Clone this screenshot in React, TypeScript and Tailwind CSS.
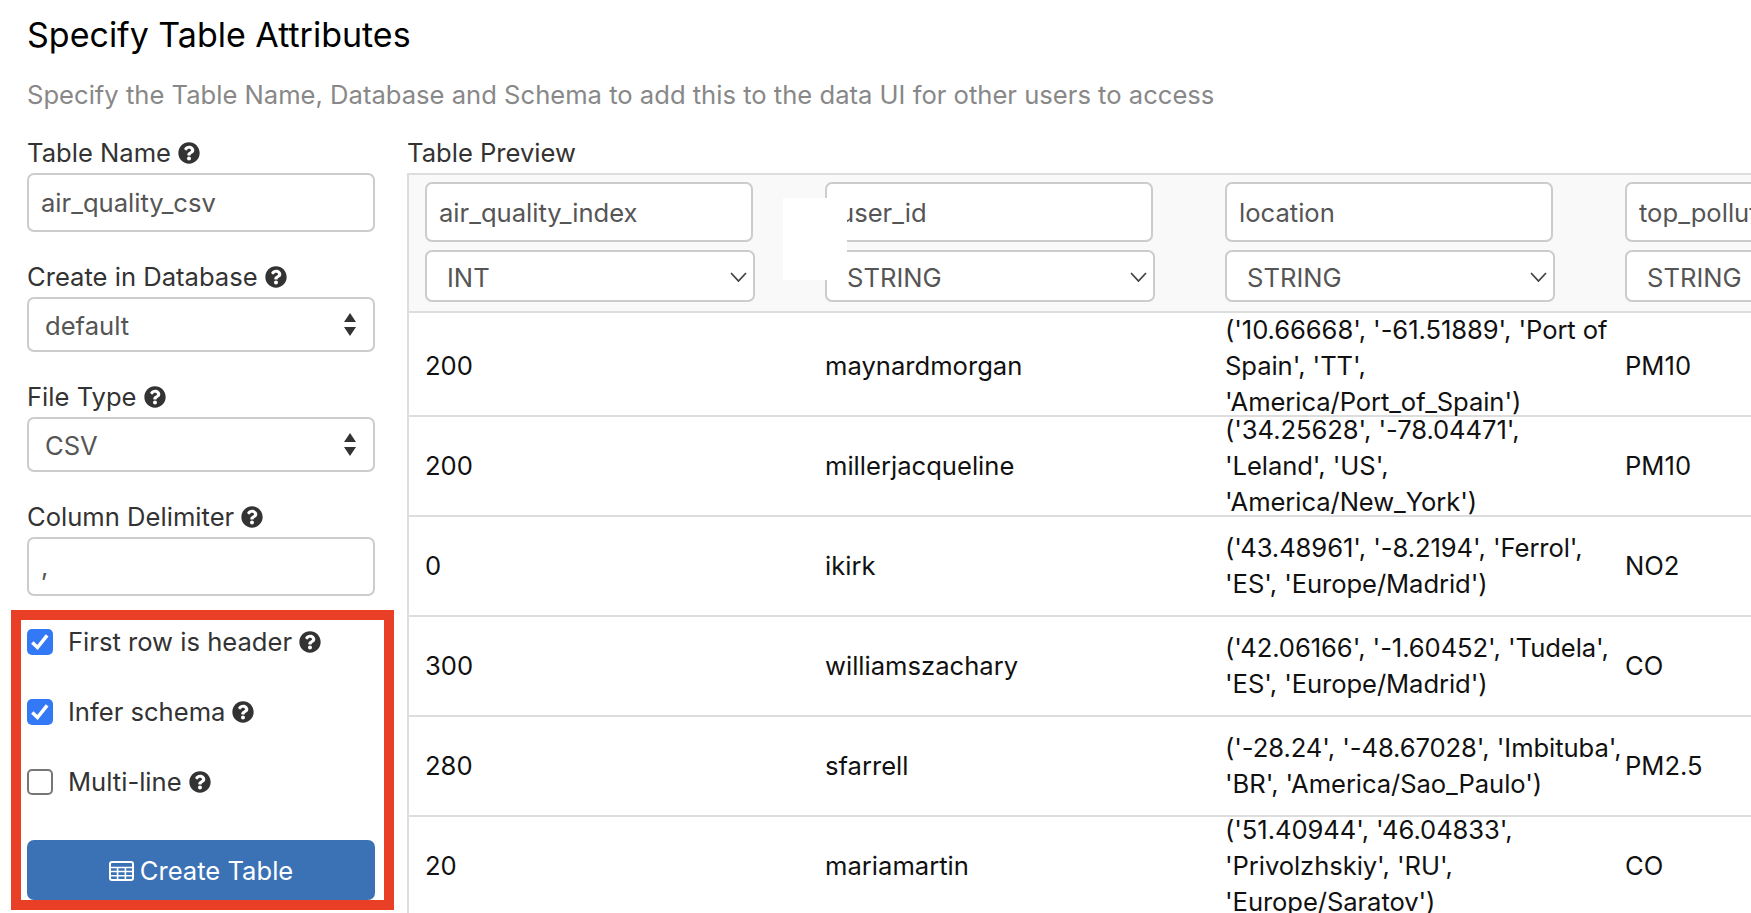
import React from 'react';
import { FaQuestionCircle } from 'react-icons/fa';

const columns = [
    { name: 'air_quality_index', type: 'INT' },
    { name: 'user_id', type: 'STRING' },
    { name: 'location', type: 'STRING' },
    { name: 'top_pollutant', type: 'STRING' },
];

const rows = [
    ['200', 'maynardmorgan', "('10.66668', '-61.51889', 'Port of Spain', 'TT', 'America/Port_of_Spain')", 'PM10'],
    ['200', 'millerjacqueline', "('34.25628', '-78.04471', 'Leland', 'US', 'America/New_York')", 'PM10'],
    ['0', 'ikirk', "('43.48961', '-8.2194', 'Ferrol', 'ES', 'Europe/Madrid')", 'NO2'],
    ['300', 'williamszachary', "('42.06166', '-1.60452', 'Tudela', 'ES', 'Europe/Madrid')", 'CO'],
    ['280', 'sfarrell', "('-28.24', '-48.67028', 'Imbituba', 'BR', 'America/Sao_Paulo')", 'PM2.5'],
    ['20', 'mariamartin', "('51.40944', '46.04833', 'Privolzhskiy', 'RU', 'Europe/Saratov')", 'CO'],
];

const Help = () => <FaQuestionCircle size={22} className="text-[#333] ml-[7px] shrink-0" />;

const Label = ({ text, className = '' }: { text: string; className?: string }) => (
    <div className={`flex items-center h-[30px] mb-[5px] text-[#333] ${className}`}>
        {text}
        <Help />
    </div>
);

const TextInput = ({ value }: { value: string }) => (
    <input
        readOnly
        value={value}
        className="block w-full h-[59px] px-[12px] bg-white border-2 border-[#ccc] rounded-[7px] text-[#555] outline-none"
    />
);

const UpDownSelect = ({ value }: { value: string }) => (
    <div className="relative h-[55px]">
        <select
            value={value}
            onChange={() => {}}
            className="block w-full h-full pl-[16px] pt-[4px] bg-white border-2 border-[#ccc] rounded-[7px] text-[#555] outline-none appearance-none"
        >
            <option>{value}</option>
        </select>
        <svg viewBox="0 0 14 26" className="absolute right-[18px] top-[15px] w-[14px] h-[26px] text-[#333]">
            <path d="M7 1 L13 10 H1 Z M1 15 H13 L7 24 Z" fill="currentColor" />
        </svg>
    </div>
);

const Checkbox = ({ label, checked }: { label: string; checked?: boolean }) => (
    <div className="flex items-center h-[70px] text-[#333]">
        <div
            className={`flex items-center justify-center w-[26px] h-[26px] rounded-[5px] mr-[15px] ${
                checked ? 'bg-[#3379f6]' : 'bg-white border-2 border-[#767676]'
            }`}
        >
            {checked && (
                <svg viewBox="0 0 20 20" className="w-[22px] h-[22px]">
                    <path d="M3 10.5 L7.7 15 L16.5 4" fill="none" stroke="white" strokeWidth="3.2" />
                </svg>
            )}
        </div>
        {label}
        <Help />
    </div>
);

const TableIcon = () => (
    <svg viewBox="0 0 25 20" className="w-[25px] h-[20px] mr-[6px]" fill="none" stroke="white">
        <rect x="1" y="1" width="23" height="18" rx="2" strokeWidth="2" />
        <path d="M1 6.5 H24 M1 10.5 H24 M1 14.8 H24 M8.6 6 V19 M16.4 6 V19" strokeWidth="1.6" />
    </svg>
);

export default function App() {
    return (
        <div className="relative h-screen overflow-hidden bg-white pl-[27px] pt-[15px] font-['Inter',sans-serif] text-[25.6px]">
            <h1 className="text-[34px] leading-[40px] text-black">Specify Table Attributes</h1>
            <p className="mt-[25px] leading-[30px] text-[#888]">
                Specify the Table Name, Database and Schema to add this to the data UI for other users to access
            </p>

            <div className="flex gap-[32px] mt-[28px]">
                {/* Left: form */}
                <div className="w-[348px] shrink-0">
                    <Label text="Table Name" />
                    <TextInput value="air_quality_csv" />
                    <Label text="Create in Database" className="mt-[30px]" />
                    <UpDownSelect value="default" />
                    <Label text="File Type" className="mt-[30px]" />
                    <UpDownSelect value="CSV" />
                    <Label text="Column Delimiter" className="mt-[30px]" />
                    <TextInput value="," />
                    <div className="mt-[11px]">
                        <Checkbox label="First row is header" checked />
                        <Checkbox label="Infer schema" checked />
                        <Checkbox label="Multi-line" />
                    </div>
                    <button className="flex items-center justify-center w-full h-[60px] pt-[2px] mt-[23px] bg-[#3b72b5] rounded-[7px] text-white">
                        <TableIcon />
                        Create Table
                    </button>
                </div>

                {/* Right: preview */}
                <div className="flex-1 min-w-0">
                    <div className="h-[30px] leading-[30px] mb-[5px] text-[#333]">Table Preview</div>
                    <div className="overflow-hidden border-t-2 border-l-2 border-[#ddd] h-[800px]">
                        <div className="grid grid-cols-[repeat(4,400px)] h-[138px] pt-[7px] bg-[#f9f9f9] border-b-2 border-[#ddd] w-[1616px]">
                            {columns.map((col) => (
                                <div key={col.name} className="pl-[16px]">
                                    <input
                                        readOnly
                                        value={col.name}
                                        className="block w-[328px] h-[60px] px-[12px] pt-[1px] bg-white border-2 border-[#ccc] rounded-[7px] text-[#555] outline-none"
                                    />
                                    <div className="relative w-[330px] h-[52px] mt-[8px]">
                                        <select
                                            value={col.type}
                                            onChange={() => {}}
                                            className="block w-full h-full pl-[20px] pt-[4px] bg-white border-2 border-[#ccc] rounded-[7px] text-[#555] outline-none appearance-none"
                                        >
                                            <option>{col.type}</option>
                                        </select>
                                        <svg viewBox="0 0 17 10" className="absolute right-[8px] top-[22px] w-[17px] h-[10px] text-[#444]">
                                            <path d="M1 1 L8.5 9 L16 1" fill="none" stroke="currentColor" strokeWidth="1.8" />
                                        </svg>
                                    </div>
                                </div>
                            ))}
                        </div>
                        {rows.map((row, i) => (
                            <div
                                key={i}
                                className={`grid grid-cols-[repeat(4,400px)] grid-rows-[minmax(0,1fr)] items-center border-b-2 border-[#ddd] w-[1616px] ${
                                    i === 0 ? 'h-[104px] pt-[4px]' : 'h-[100px]'
                                }`}
                            >
                                {row.map((cell, j) => (
                                    <div
                                        key={j}
                                        className={`pl-[16px] -mr-[16px] leading-[36px] text-[#111] ${
                                            j === 2 ? 'tracking-[-0.08px]' : ''
                                        }`}
                                    >
                                        {cell}
                                    </div>
                                ))}
                            </div>
                        ))}
                    </div>
                </div>
            </div>

            {/* Red annotation box and the white patch left in the screenshot */}
            <div className="absolute left-[11px] top-[610px] w-[383px] h-[300px] border-[10px] border-[#ea3f27] pointer-events-none" />
            <div className="absolute left-[783px] top-[198px] w-[64px] h-[82px] bg-white pointer-events-none" />
        </div>
    );
}
